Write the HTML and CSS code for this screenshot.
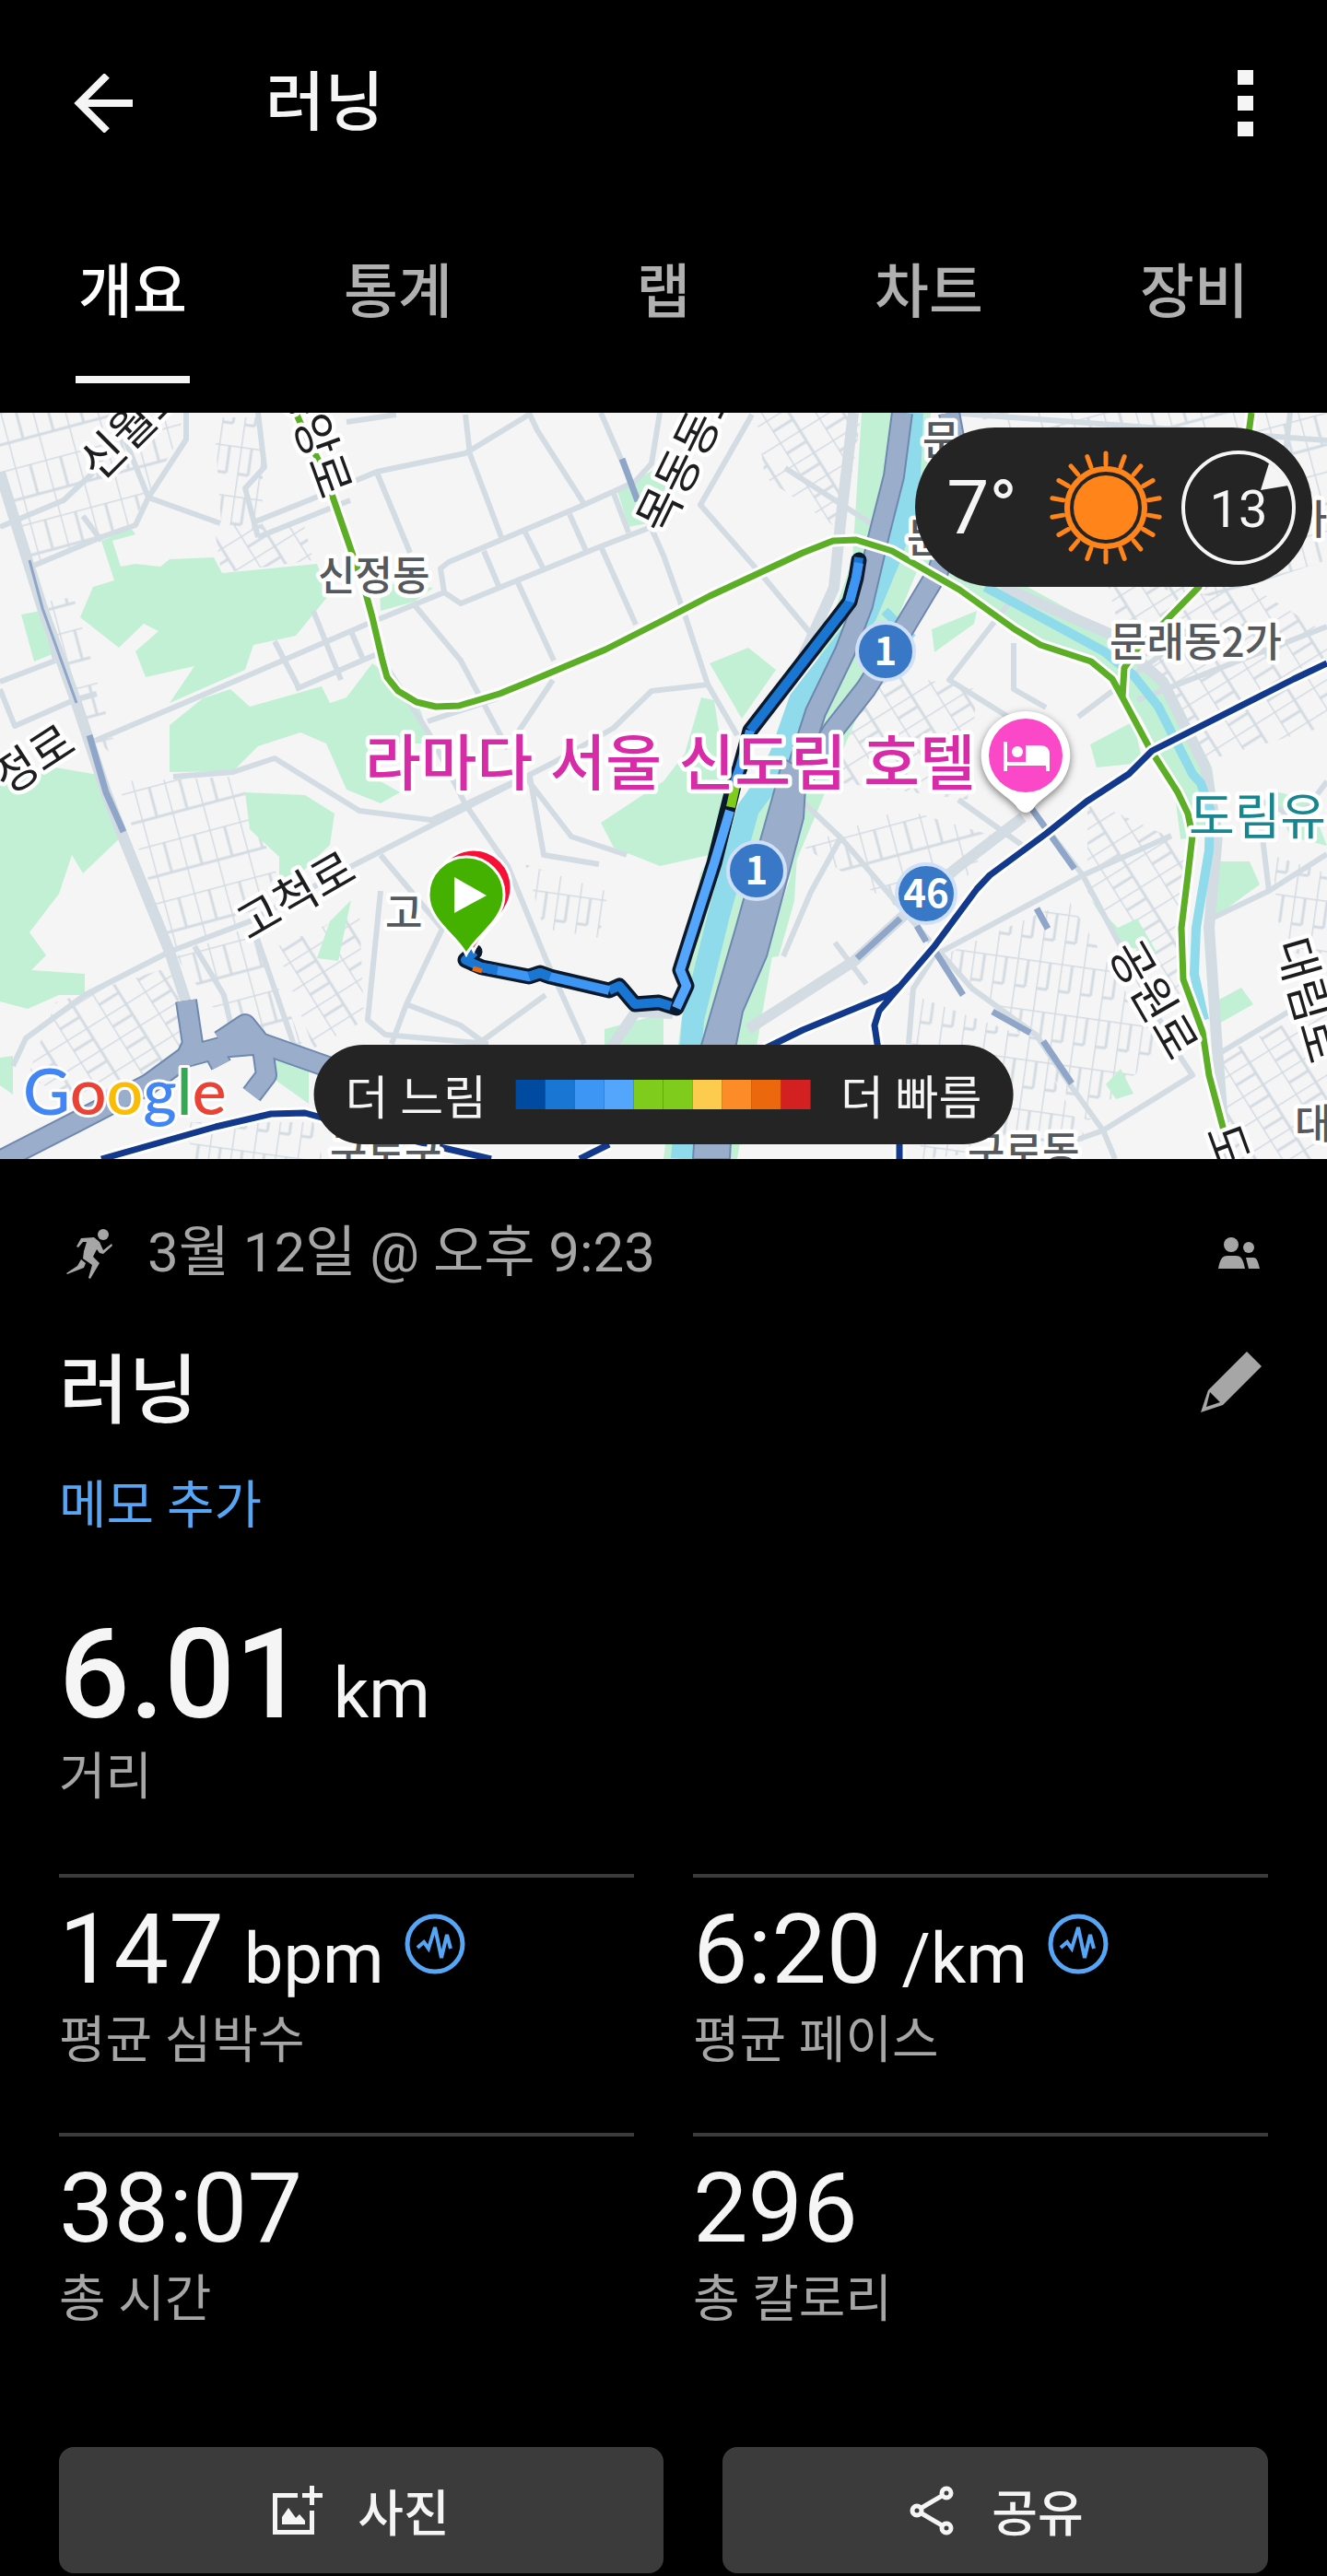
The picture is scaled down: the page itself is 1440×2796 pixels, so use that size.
FILE: index.html
```html
<!DOCTYPE html>
<html lang="ko">
<head>
    <meta charset="UTF-8">
    <meta name="viewport" content="width=device-width, initial-scale=1.0">
    <title>러닝</title>
    <link rel="stylesheet" href="styles.css">
</head>
<body>
    <header class="app-bar">
        <button class="icon-btn" type="button" aria-label="뒤로">
            <svg width="64" height="64" viewBox="0 0 64 64" fill="none" stroke="currentColor" stroke-width="8">
                <path d="M65 32H6M36 2L6 32l30 30"/>
            </svg>
        </button>
        <h1 class="app-title">러닝</h1>
        <button class="icon-btn menu-btn" type="button" aria-label="메뉴">
            <svg width="17" height="72" viewBox="0 0 17 72" fill="currentColor">
                <path d="M0 0h17v16H0zM0 28h17v16H0zM0 56h17v16H0z"/>
            </svg>
        </button>
    </header>

    <nav class="tabs">
        <a class="tab active" href="#overview">개요</a>
        <a class="tab" href="#stats">통계</a>
        <a class="tab" href="#laps">랩</a>
        <a class="tab" href="#charts">차트</a>
        <a class="tab" href="#gear">장비</a>
    </nav>

    <section class="map">
        <svg class="map-canvas" viewBox="0 0 1440 810">
            <defs>
                <pattern id="blocks-a" width="34" height="62" patternUnits="userSpaceOnUse" patternTransform="rotate(-15)">
                    <path d="M0 0H34M0 34H34M0 0V62M17 0V34" class="street"/>
                </pattern>
                <pattern id="blocks-b" width="50" height="28" patternUnits="userSpaceOnUse" patternTransform="rotate(-32)">
                    <path d="M0 0H50M0 14H26M0 0V28M26 0V28" class="street"/>
                </pattern>
                <pattern id="blocks-c" width="24" height="54" patternUnits="userSpaceOnUse" patternTransform="rotate(8)">
                    <path d="M0 0H24M0 30H12M0 0V54M12 0V30" class="street"/>
                </pattern>
            </defs>

            <rect width="1440" height="810" fill="#f5f5f5"/>

            <!-- 주택가 골목 -->
            <path fill="url(#blocks-a)" d="M0 0H200L190 35 142 122 34 167 0 70zM50 205L80 200 130 380 100 350zM128 400L260 395 300 500 270 552 184 582zM190 590L270 558 310 640 330 690 250 670z"/>
            <path fill="url(#blocks-a)" d="M1060 0H1440V160L1320 200 1180 180 1080 20zM870 470L980 430 1080 460 1010 560z"/>
            <path fill="url(#blocks-b)" d="M820 0H935L915 130 830 70zM232 120L330 122 340 160 240 174zM300 580L390 540 395 660 340 690zM60 640L190 600 200 690 100 760 30 720zM950 280L1060 300 1050 420 900 400z"/>
            <path fill="url(#blocks-b)" d="M1200 180L1360 190 1440 240V340L1300 380 1230 290zM1180 420L1290 470 1280 640 1180 520zM1320 700L1440 640V810H1340z"/>
            <path fill="url(#blocks-c)" d="M232 5H285V130L240 120zM1020 590L1160 530 1260 690 1180 770 1080 640zM985 630L1120 680 1180 790 1000 810zM570 490L660 520 650 570 590 560zM200 770L340 770 350 810H210zM1380 480L1440 500V600L1390 580z"/>

            <!-- 공원 -->
            <g fill="#c2f0d5">
                <path d="M110 139L142 125 147 132 122 139 131 167 147 164 174 167 184 159 232 157 241 174 344 164 356 199 321 242 275 252 266 279 184 315 211 275 158 287 147 259 172 237 156 229 129 255 87 222 101 189 124 182z"/>
                <path d="M250 300L271 319 349 297 358 315 376 309 404 272 418 282 455 319 468 359 399 359V392L434 412 413 424 376 409 354 359 326 347 280 362 253 389 184 390V339L220 310z"/>
                <path d="M0 405L60 385 101 392 110 395 133 459 90 500 78 480 64 522 32 564 50 589 34 605 92 609V632H64L30 647 0 639z"/>
                <path d="M266 412L331 415 363 435 358 469 321 505H303V482L271 452z"/>
                <path d="M381 529L367 595 344 592 358 552zM295 700L335 712V750L300 725zM0 700L14 698V740L0 730z"/>
                <path d="M775 312L761 309 743 370 720 400 652 445 666 472 716 492 770 480 790 410z"/>
                <path d="M770 272L812 255 842 279 805 332zM23 219L44 215 57 262 37 270z"/>
                <path d="M709 62L728 70V115L682 124 670 85zM1011 235L1060 215 1057 229 1014 260z"/>
                <path d="M412 185L470 190 450 205 413 215zM656 669L720 652V700H656zM865 480L862 530 845 590 830 592z"/>
                <path d="M1321 487H1356L1367 512 1319 547zM1319 639L1347 624 1360 642 1321 664zM1200 729L1216 712 1230 739 1211 745z"/>
                <path d="M1184 529L1213 559 1234 549 1255 585 1216 579zM1183 360L1230 335 1240 380 1190 385zM1380 410L1420 420 1440 470 1400 460z"/>
                <path d="M935 0H1010L1000 160 930 330 850 520 800 810H720L760 500 880 290 925 160z"/>
            </g>
            <path class="park-band" d="M1000 130L1069 189 1198 259 1230 285 1257 319 1294 392 1303 460"/>

            <!-- 일반 도로 -->
            <g class="road">
                <path d="M0 124L69 95 101 65 140 0M34 167L110 135 147 122 161 92 202 29V0M161 92L239 120M124 0L161 92M90 112L110 139"/>
                <path d="M275 119L335 95 409 64 505 44 574 2M280 0L287 59 266 82 280 135M376 10L430 2M280 135L380 95"/>
                <path d="M0 292L60 269M0 300L16 340 80 312 105 305M60 269L48 212M96 359L207 312 399 229 482 195 478 169 487 162 629 102 689 75 707 55 716 0"/>
                <path d="M482 195L500 207 652 145 720 119M409 65L445 152M450 209L500 269 551 365M505 2L510 45 544 135M560 180L601 269M574 0L583 19 634 99"/>
                <path d="M340 215L370 290M380 235L395 270M321 300L409 262M298 248L325 300M525 150L542 190M570 130L590 170M618 110L636 150M652 145L690 230M665 85L682 130"/>
                <path d="M652 0L689 85 720 155 743 219 768 295 800 350M409 259L468 352 505 425 551 492 592 592 634 685M464 335L540 310"/>
                <path d="M184 585L271 552 376 495 505 429 600 380 666 342 707 302 768 295M188 395L253 390 298 375 390 432 468 442 505 425"/>
                <path d="M505 425L570 395 620 460 680 480M575 395L590 480 650 490M560 350L600 290"/>
                <path d="M14 709L28 679 92 632 184 585M211 579L243 632 257 692M275 559L321 692M413 519L399 659 418 675 530 685M441 642L500 665 523 682 592 632M441 642L480 560 413 480M441 642L425 685"/>
                <path d="M871 422L913 462 1005 569 1055 625 1124 675 1161 729 1197 779 1210 810M1014 589L1133 525 1175 502 1271 459M986 685L991 625 1014 589"/>
                <path d="M1119 429L1175 502 1276 692 1294 719 1197 779 1110 810M1317 699L1440 625M1308 552L1377 519 1440 479M1377 519L1365 420 1410 440 1440 400"/>
                <path d="M1234 312L1440 232M1110 340L1030 290 1100 200M1100 250V300L1135 320M816 2L760 100 830 180 880 240M852 60L948 122"/>
                <path d="M912 462L880 520 850 590M906 575L940 620M1040 420L1110 470M1170 330L1290 240M1400 0L1385 130M1030 0L1440 30"/>
            </g>
            <g class="road wide">
                <path d="M0 65L46 212 83 315 115 412 133 459 184 585 202 640M812 669L927 595 977 549 1037 495 1110 439"/>
                <path d="M1087 189L1202 239 1262 292 1308 385 1321 459 1312 559 1321 692 1330 810M926 0L912 120 905 190 860 290M656 700L690 650 730 652"/>
            </g>
            <path class="trunk" d="M32 160L46 212 83 315"/>
            <path class="trunk thick" d="M97 350L115 412 134 455"/>
            <path class="trunk thick" d="M675 50L692 96M1119 429L1166 495M1125 538L1137 560M995 557L1005 574M1015 585L1045 632M1077 650L1118 673M1132 682L1163 728M930 592L977 549"/>

            <!-- 안양천, 도림천 -->
            <path class="river" d="M990 0L986 92 968 152 940 219 868 312 840 392 812 430 780 545 752 659 740 810"/>
            <path class="creek" d="M960 215L990 245M1069 189L1198 259 1230 285 1257 319 1294 392 1303 402 1313 430 1312 475 1298 559 1296 609 1307 659"/>

            <!-- 고속화도로 -->
            <g class="highway">
                <path class="edge" d="M1030 0L1045 80 1018 172 982 232 940 299 904 345 850 430"/>
                <path class="fill" d="M1030 0L1045 80 1018 172 982 232 940 299 904 345 850 430"/>
                <path class="edge" d="M979 0L970 69 954 132 936 209 917 259 885 325 858 409"/>
                <path class="fill" d="M979 0L970 69 954 132 936 209 917 259 885 325 858 409"/>
                <path fill="#9aaecb" stroke="#6f88b0" stroke-width="2" d="M850 375L875 390 872 440 832 590 806 650 798 690 792 810H752L760 690 798 560z"/>
                <path class="edge" d="M0 812L82 770 161 729 202 699 239 689 285 685 370 715M202 638L209 685 200 704M239 682L266 664 282 684M285 690L289 719 273 740M228 685L240 708"/>
                <path class="fill" d="M0 812L82 770 161 729 202 699 239 689 285 685 370 715M202 638L209 685 200 704M239 682L266 664 282 684M285 690L289 719 273 740M228 685L240 708"/>
            </g>

            <!-- 지하철 노선 -->
            <g class="subway">
                <path class="casing" d="M321 0L337 35 351 62 363 97 383 155 395 189 404 222 415 269 420 287 432 302 452 314 473 319 498 318 542 305 574 292 657 257 720 225 770 199 871 152 904 139 929 138 968 150 1041 192 1101 235 1129 252 1184 270 1207 289 1218 309 1248 365 1278 412 1289 435 1294 459 1289 502 1282 559 1284 615 1305 672 1312 719 1328 779M1358 0L1350 60 1301 189 1262 229 1235 255 1220 277 1218 309"/>
                <path class="green" d="M321 0L337 35 351 62 363 97 383 155 395 189 404 222 415 269 420 287 432 302 452 314 473 319 498 318 542 305 574 292 657 257 720 225 770 199 871 152 904 139 929 138 968 150 1041 192 1101 235 1129 252 1184 270 1207 289 1218 309 1248 365 1278 412 1289 435 1294 459 1289 502 1282 559 1284 615 1305 672 1312 719 1328 779M1358 0L1350 60 1301 189 1262 229 1235 255 1220 277 1218 309"/>
                <path class="casing" d="M1440 272L1404 289 1250 367 1225 392 1179 422 1135 457 1074 502 1060 517 1014 579 977 622 963 632 871 670 830 690M977 622L954 649 949 665 952 685 976 794V810M110 810L234 775 294 761 331 760 349 765 477 797 533 810M629 810L661 794"/>
                <path class="navy" d="M1440 272L1404 289 1250 367 1225 392 1179 422 1135 457 1074 502 1060 517 1014 579 977 622 963 632 871 670 830 690M977 622L954 649 949 665 952 685 976 794V810M110 810L234 775 294 761 331 760 349 765 477 797 533 810M629 810L661 794"/>
            </g>

            <!-- 러닝 경로 -->
            <g class="route">
                <path class="outline" d="M932 160L929 179 922 205 913 217 814 345 803 385 796 405 791 425 775 489 743 589 738 605 745 622 734 646 715 640 689 642 672 622 661 627 597 612 586 608 574 612 523 602 505 594 515 585"/>
                <path stroke="#1976d2" d="M932 157L929 179 922 205 913 217 814 345"/>
                <path stroke="#3e96f4" d="M932 163L929 179 922 205M814 345L803 385 796 405"/>
                <path stroke="#80cc1c" d="M798 405L793 428"/>
                <path stroke="#54a6fc" d="M792 432L775 489 743 589 738 605 745 622 734 646"/>
                <path stroke="#1976d2" d="M728 644L715 640 689 642 672 622 661 627"/>
                <path stroke="#3e96f4" d="M661 627L597 612 586 608 574 612 523 602"/>
                <path stroke="#1976d2" d="M597 612L586 608 574 612M540 605L523 602 505 594 515 585"/>
                <path stroke="#ec680c" stroke-width="5" d="M513 603L523 606"/>
            </g>

            <!-- 지명 -->
            <g class="road-name">
                <text transform="translate(108 76) rotate(-45)">신월로</text>
                <text transform="translate(302 -34) rotate(70)">중앙로</text>
                <text transform="translate(722 134) rotate(-64)">목동동로</text>
                <text transform="translate(8 416) rotate(-33)">정로</text>
                <text transform="translate(270 574) rotate(-30)">고척로</text>
                <text transform="translate(1202 586) rotate(60)">공원로</text>
                <text transform="translate(1384 576) rotate(74)">대림로</text>
                <text transform="translate(1308 780) rotate(70)">도</text>
            </g>
            <g class="district">
                <text x="345" y="193">신정동</text>
                <text x="1204" y="265">문래동2가</text>
                <text x="418" y="559">고</text>
                <text x="1001" y="46">문</text>
                <text x="984" y="152">문</text>
                <text x="1400" y="132">가</text>
                <text x="358" y="818">구로구</text>
                <text x="1050" y="818">구로동</text>
                <text x="1405" y="788">대</text>
            </g>
            <text class="water-name" x="1290" y="458">도림유수지</text>
            <text class="place" x="396" y="404">라마다 서울 신도림 호텔</text>

            <g class="shield">
                <circle cx="961" cy="259" r="31"/>
                <text x="961" y="274">1</text>
                <circle cx="821" cy="497" r="31"/>
                <text x="821" y="512">1</text>
                <circle cx="1005" cy="522" r="32"/>
                <text x="1005" y="537">46</text>
            </g>

            <g class="hotel-pin">
                <path fill="#fff" d="M1113 324a48 48 0 0 1 40 75c-10 14-25 20-32 31q-8 8-16 0c-7-11-22-17-32-31a48 48 0 0 1 40-75z"/>
                <circle cx="1113" cy="372" r="40" fill="#fb48c8"/>
                <g fill="none" stroke="#fff" stroke-width="4">
                    <path d="M1091 357v32M1091 381h46M1137 389v-20"/>
                    <circle cx="1104" cy="368" r="6" fill="#fff" stroke="none"/>
                    <path fill="#fff" d="M1115 363h14q8 0 8 8v8h-22z"/>
                </g>
            </g>

            <path fill="#f80f36" stroke="#fff" stroke-width="3" d="M514 474a41 41 0 0 1 41 42c0 27-30 45-41 68-11-23-41-41-41-68a41 41 0 0 1 41-42z"/>
            <path fill="#44b000" stroke="#fff" stroke-width="3" d="M506 482a41 41 0 0 1 41 42c0 27-30 43-41 64-11-21-41-37-41-64a41 41 0 0 1 41-42z"/>
            <path fill="#fff" d="M493 504l35 20-35 19z"/>

            <text class="google" x="25" y="762"><tspan fill="#4285f4">G</tspan><tspan fill="#ea4335">o</tspan><tspan fill="#fbbc05">o</tspan><tspan fill="#4285f4">g</tspan><tspan fill="#34a853">l</tspan><tspan fill="#ea4335">e</tspan></text>
        </svg>

        <div class="weather">
            <span class="temp">7°</span>
            <svg width="124" height="124" viewBox="-62 -62 124 124">
                <g stroke="#ff851b" stroke-width="5" stroke-linecap="round">
                    <path id="ray" d="M0-47V-59"/>
                    <use href="#ray" transform="rotate(20)"/>
                    <use href="#ray" transform="rotate(40)"/>
                    <use href="#ray" transform="rotate(60)"/>
                    <use href="#ray" transform="rotate(80)"/>
                    <use href="#ray" transform="rotate(100)"/>
                    <use href="#ray" transform="rotate(120)"/>
                    <use href="#ray" transform="rotate(140)"/>
                    <use href="#ray" transform="rotate(160)"/>
                    <use href="#ray" transform="rotate(180)"/>
                    <use href="#ray" transform="rotate(200)"/>
                    <use href="#ray" transform="rotate(220)"/>
                    <use href="#ray" transform="rotate(240)"/>
                    <use href="#ray" transform="rotate(260)"/>
                    <use href="#ray" transform="rotate(280)"/>
                    <use href="#ray" transform="rotate(300)"/>
                    <use href="#ray" transform="rotate(320)"/>
                    <use href="#ray" transform="rotate(340)"/>
                </g>
                <circle r="42" fill="none" stroke="#ff851b" stroke-width="6"/>
                <circle r="35" fill="#ff851b"/>
            </svg>
            <div class="wind">
                <svg width="124" height="124" viewBox="-62 -62 124 124">
                    <circle r="60" fill="none" stroke="#f5f5f5" stroke-width="4"/>
                    <path d="M33-48A60 60 0 0 1 54-24L24-19z" fill="#f5f5f5"/>
                </svg>
                <span class="wind-speed">13</span>
            </div>
        </div>

        <div class="legend">
            <span>더 느림</span>
            <div class="scale">
                <i class="c1"></i><i class="c2"></i><i class="c3"></i><i class="c4"></i><i class="c5"></i>
                <i class="c5"></i><i class="c6"></i><i class="c7"></i><i class="c8"></i><i class="c9"></i>
            </div>
            <span>더 빠름</span>
        </div>
    </section>

    <main class="details">
        <div class="meta">
            <svg width="64" height="56" viewBox="0 0 64 56" fill="currentColor">
                <circle cx="48" cy="8" r="6"/>
                <path d="M24 12L38 11 44 16 48 25 57 18 58 20 48 29 44 28 41 24 37 32 44 39 34 56 32 55 36 41 26 34 27 26 30 16 26 16 21 22 19 21zM24 35L29 39 27 44 9 51 8 50 20 42z"/>
            </svg>
            <span class="date">3월 12일 @ 오후 9:23</span>
            <svg class="group-icon" width="45" height="34" viewBox="0 0 45 34" fill="currentColor">
                <circle cx="14" cy="8" r="8"/>
                <circle cx="33" cy="11" r="6"/>
                <path d="M0 34C2 24 4 20 10 20h9c6 0 8 4 10 14zM30 22h8c4 0 5 4 7 12H33z"/>
            </svg>
        </div>

        <div class="title-row">
            <h2 class="activity-name">러닝</h2>
            <button class="icon-btn edit-btn" type="button" aria-label="이름 편집">
                <svg width="66" height="66" viewBox="0 0 66 66" fill="currentColor" fill-rule="evenodd">
                    <path d="M50 0L66 16 24 58 0 66 8 42zM10 44L6 60 21 55z"/>
                </svg>
            </button>
        </div>

        <a class="memo" href="#memo">메모 추가</a>

        <div class="distance">
            <div class="distance-value">6.01 <span class="unit">km</span></div>
            <div class="label">거리</div>
        </div>

        <div class="metrics">
            <div class="metric">
                <div class="value">147 <span class="unit">bpm</span>
                    <svg class="pulse" width="66" height="66" viewBox="0 0 66 66" fill="none" stroke="currentColor">
                        <circle cx="33" cy="33" r="30" stroke-width="5"/>
                        <path d="M14 37l7-6 5 7 7-23 7 33 6-25 4 15" stroke-width="4"/>
                    </svg>
                </div>
                <div class="label">평균 심박수</div>
            </div>
            <div class="metric">
                <div class="value">6:20 <span class="unit">/km</span>
                    <svg class="pulse" width="66" height="66" viewBox="0 0 66 66" fill="none" stroke="currentColor">
                        <circle cx="33" cy="33" r="30" stroke-width="5"/>
                        <path d="M14 37l7-6 5 7 7-23 7 33 6-25 4 15" stroke-width="4"/>
                    </svg>
                </div>
                <div class="label">평균 페이스</div>
            </div>
            <div class="metric">
                <div class="value">38:07</div>
                <div class="label">총 시간</div>
            </div>
            <div class="metric">
                <div class="value">296</div>
                <div class="label">총 칼로리</div>
            </div>
        </div>

        <div class="actions">
            <button class="action photo" type="button">
                <svg width="54" height="54" viewBox="0 0 54 54" fill="currentColor">
                    <path d="M0 8H27v5H5V48H40V27h5V53H0z"/>
                    <path d="M40 0h5v8h9v5h-9v8h-5v-8h-8V8h8zM10 42V34l7-10 8 11 4-4 6 7v4z"/>
                </svg>
                사진
            </button>
            <button class="action share" type="button">
                <svg width="54" height="54" viewBox="0 0 54 54" fill="none" stroke="currentColor" stroke-width="5">
                    <circle cx="11" cy="27" r="5"/>
                    <circle cx="43" cy="8" r="5"/>
                    <circle cx="43" cy="46" r="5"/>
                    <path d="M16 24L38 11M16 30L38 43"/>
                </svg>
                공유
            </button>
        </div>
    </main>
</body>
</html>
```
FILE: styles.css
```css
* {
    margin: 0;
    padding: 0;
    box-sizing: border-box;
}

body {
    background: #000;
    color: #f5f5f5;
    font-family: Roboto, 'Noto Sans CJK KR', sans-serif;
}

svg {
    display: block;
    flex: none;
}

a {
    text-decoration: none;
}

.icon-btn {
    background: none;
    border: none;
    color: inherit;
    cursor: pointer;
}

/* 상단 바 */
.app-bar {
    display: flex;
    align-items: center;
    height: 224px;
    padding: 0 80px;
}

.app-title {
    margin-left: 144px;
    font-size: 70px;
    font-weight: 500;
    line-height: 80px;
}

.menu-btn {
    margin-left: auto;
}

.tabs {
    display: grid;
    grid-template-columns: repeat(5, 1fr);
}

.tab {
    display: flex;
    flex-direction: column;
    align-items: center;
    gap: 50px;
    padding: 54px 0 32px;
    color: #b0b0b0;
    font-size: 64px;
    font-weight: 500;
    line-height: 80px;
}

.tab::after {
    content: '';
    width: 124px;
    height: 8px;
}

.tab.active {
    color: #fff;
}

.tab.active::after {
    background: #f5f5f5;
}

/* 지도 */
.map {
    position: relative;
    overflow: hidden;
}

.map-canvas {
    width: 100%;
    height: auto;
    font-family: 'Noto Sans CJK KR', sans-serif;
}

.street {
    fill: none;
    stroke: #d3dbe2;
    stroke-width: 3;
}

.park-band {
    fill: none;
    stroke: #c2f0d5;
    stroke-width: 44;
}

.road {
    fill: none;
    stroke: #d3dce3;
    stroke-width: 6;
    stroke-linejoin: round;
}

.road.wide {
    stroke-width: 12;
}

.trunk {
    fill: none;
    stroke: #8fa6c8;
    stroke-width: 3;
}

.trunk.thick {
    stroke-width: 7;
}

.river {
    fill: none;
    stroke: #90dbeb;
    stroke-width: 24;
}

.creek {
    fill: none;
    stroke: #90dbeb;
    stroke-width: 10;
}

.highway .edge,
.highway .fill {
    fill: none;
    stroke-linejoin: round;
}

.highway .edge {
    stroke: #6f88b0;
    stroke-width: 24;
}

.highway .fill {
    stroke: #9aaecb;
    stroke-width: 20;
}

.subway path {
    fill: none;
    stroke-width: 7;
    stroke-linejoin: round;
}

.subway .casing {
    stroke: #fff;
    stroke-width: 13;
}

.subway .green {
    stroke: #5cae26;
}

.subway .navy {
    stroke: #12398c;
}

.route {
    fill: none;
    stroke-width: 10;
    stroke-linejoin: round;
}

.route .outline {
    stroke: #0a1a2c;
    stroke-width: 17;
    stroke-linecap: round;
}

.road-name,
.district,
.water-name,
.place,
.google {
    stroke: #fff;
    stroke-width: 9;
    stroke-linejoin: round;
    paint-order: stroke;
}

.road-name {
    fill: #1d1d1f;
    font-size: 50px;
}

.district {
    fill: #55585c;
    font-size: 44px;
    font-weight: 500;
}

.water-name {
    fill: #17868f;
    font-size: 54px;
}

.place {
    fill: #d82ba8;
    font-size: 66px;
    font-weight: 500;
}

.shield circle {
    fill: #3878c7;
    stroke: #cfe0f8;
    stroke-width: 4;
}

.shield text {
    fill: #fff;
    font-size: 42px;
    font-weight: 700;
    text-anchor: middle;
}

.hotel-pin {
    filter: drop-shadow(0 3px 4px rgba(0, 0, 0, 0.5));
}

.google {
    font-family: Lato, sans-serif;
    font-size: 70px;
    font-weight: 500;
    stroke-width: 6;
}

.weather {
    position: absolute;
    top: 16px;
    right: 16px;
    display: flex;
    align-items: center;
    height: 173px;
    padding: 0 18px 0 34px;
    border-radius: 87px;
    background: #242424;
}

.temp {
    margin-right: 34px;
    font-size: 82px;
}

.wind {
    position: relative;
    margin-left: 20px;
}

.wind-speed {
    position: absolute;
    inset: 0;
    font-size: 56px;
    line-height: 128px;
    text-align: center;
}

.legend {
    position: absolute;
    bottom: 16px;
    left: 50%;
    transform: translateX(-50%);
    display: flex;
    align-items: center;
    gap: 32px;
    height: 108px;
    padding: 0 34px;
    border-radius: 54px;
    background: #242424;
    font-size: 51px;
    white-space: nowrap;
}

.scale {
    display: flex;
}

.scale i {
    width: 32px;
    height: 32px;
}

.c1 { background: #004a9f; }
.c2 { background: #1976d2; }
.c3 { background: #3e96f4; }
.c4 { background: #54a6fc; }
.c5 { background: #80cc1c; }
.c6 { background: #fdcb4e; }
.c7 { background: #fb8c28; }
.c8 { background: #ec680c; }
.c9 { background: #d32020; }

/* 활동 정보 */
.details {
    padding: 62px 64px 0;
}

.meta {
    display: flex;
    align-items: center;
    gap: 32px;
    color: #a6a6a6;
    font-size: 60px;
    line-height: 80px;
}

.group-icon {
    margin: 0 9px 0 auto;
}

.title-row {
    display: flex;
    align-items: center;
    justify-content: space-between;
    margin-top: 60px;
}

.activity-name {
    font-size: 82px;
    font-weight: 500;
    line-height: 100px;
}

.edit-btn {
    margin: 0 7px 20px 0;
    color: #a6a6a6;
}

.memo {
    display: block;
    margin-top: 38px;
    color: #57a5f5;
    font-size: 56px;
    line-height: 72px;
}

.distance {
    margin-top: 68px;
}

.distance-value {
    display: flex;
    align-items: baseline;
    gap: 30px;
    font-size: 135px;
    font-weight: 500;
    line-height: 160px;
}

.unit {
    font-size: 76px;
    font-weight: 400;
    line-height: 1;
}

.label {
    color: #a6a6a6;
    font-size: 55px;
    line-height: 60px;
}

.metrics {
    display: grid;
    grid-template-columns: 1fr 1fr;
    gap: 71px 64px;
    margin-top: 76px;
}

.metric {
    padding-top: 18px;
    border-top: 4px solid #3b3b3b;
}

.value {
    display: flex;
    align-items: baseline;
    gap: 22px;
    margin-bottom: 8px;
    font-size: 106px;
    line-height: 120px;
}

.pulse {
    align-self: center;
    margin-bottom: 12px;
    color: #57a5f5;
}

.actions {
    display: flex;
    gap: 64px;
    margin-top: 131px;
}

.action {
    display: flex;
    align-items: center;
    justify-content: center;
    gap: 38px;
    height: 137px;
    border: none;
    border-radius: 16px;
    background: #3b3b3b;
    color: #f5f5f5;
    font-family: inherit;
    font-size: 54px;
    font-weight: 500;
    cursor: pointer;
}

.photo {
    flex: 41;
}

.share {
    flex: 37;
}
```
